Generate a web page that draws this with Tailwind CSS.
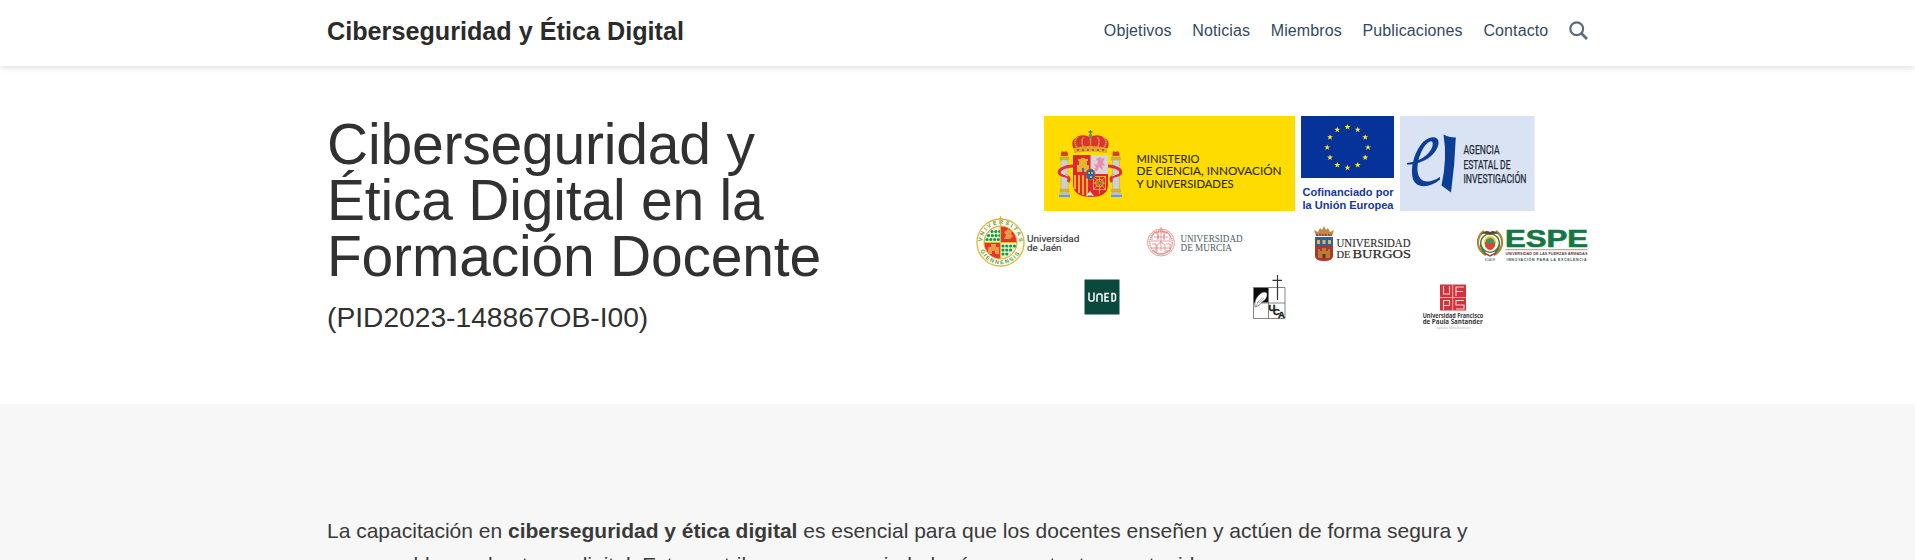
<!DOCTYPE html>
<html lang="es">
<head>
<meta charset="utf-8">
<title>Ciberseguridad y Ética Digital</title>
<script src="https://cdn.jsdelivr.net/npm/@tailwindcss/browser@4"></script>
</head>
<body class="h-[560px] overflow-hidden bg-white font-['Liberation_Sans',Arial,sans-serif] text-[#313131]">
<header class="h-[66px] bg-white shadow-[0_2px_6px_rgba(0,0,0,0.12)]">
  <div class="mx-auto flex h-[62px] w-[1261px] items-center justify-between">
    <a class="pt-[2px] text-[25.2px] font-bold leading-none whitespace-nowrap text-[#2b2b2b]">Ciberseguridad y Ética Digital</a>
    <nav class="flex items-center gap-[20.7px] text-base tracking-[0.11px] whitespace-nowrap text-[#34495e]">
      <a>Objetivos</a><a>Noticias</a><a>Miembros</a><a>Publicaciones</a><a>Contacto</a>
      <svg class="-mt-px size-[19px]" viewBox="0 0 19 19" fill="none" stroke="#5a6b7b" stroke-width="2.2"><circle cx="7.7" cy="7.7" r="6.4"/><path d="M12.3 12.3L18 18" stroke-width="2.7"/></svg>
    </nav>
  </div>
</header>
<main>
  <section class="mx-auto flex h-[338px] w-[1261px] justify-between">
    <div class="pt-[50px]">
      <h1 class="text-[57px] leading-[56px] tracking-[-0.2px] whitespace-nowrap">Ciberseguridad y<br>Ética Digital en la<br>Formación Docente</h1>
      <p class="mt-[19px] text-[28.2px] leading-none whitespace-nowrap">(PID2023-148867OB-I00)</p>
    </div>
    <div class="flex w-[613px] flex-col pt-[50px]">
      <div class="flex gap-[6px] pl-[69px]">
        <svg class="h-[96px] w-[251px] overflow-visible" viewBox="1044 116 251 96">
          <rect x="1044" y="116" width="251" height="95" fill="#ffdc00"/>
          <g stroke="#bba75b" stroke-width=".5">
            <path d="M1061 159h7v34h-7zM1112.500 159h7v34h-7z" fill="#cbd0d3"/>
            <path d="M1060 157h9v3h-9zM1111.500 157h9v3h-9zM1060 189h9v3h-9zM1111.500 189h9v3h-9z" fill="#dcae2c"/>
            <path d="M1061 156v-3l1-2 2 1 2-1 2 2v3zM1112.500 156v-3l1-2 2 1 2-1 2 2v3z" fill="#d83a2b"/>
          </g>
          <path d="M1059 193h11v4h-11zM1111 193h11v4h-11z" fill="#a9c4d8"/>
          <path d="M1059 196h11M1111 196h11" stroke="#3c6fae" stroke-width="1.200"/>
          <path d="M1074 166q-9 0-14 4-3 5 6 6 5 2 2 6M1107 166q8 0 13 4 3 5-6 6-5 2-2 6" fill="none" stroke="#dc3236" stroke-width="3"/>
          <path d="M1061 173l7 3M1112 176l7-3" stroke="#f2d9bb" stroke-width="1"/>
          <path d="M1073 155h35v30q0 12-17 12t-18-12z" fill="#dd2733"/>
          <path d="M1090.500 155h17.500v19h-17.500z" fill="#d9d3d5"/>
          <path d="M1094 171l2-4-2-3 3 1 1-4-2-2 4-2 2 2 3-2-2 5 2 4-3-1 1 5-4-3-2 4z" fill="#ec8cac"/>
          <path d="M1077 172v-7h2v-4h2v-3h4v3h2v4h2v7zM1078 159h10v2h-10z" fill="#e7b32e"/><path d="M1082 172v-4h2v4z" fill="#3e6eae"/>
          <path d="M1075 175v14M1079 175v18M1083 175v20M1087 175v21" stroke="#f2bd2e" stroke-width="1.800"/>
          <g fill="none" stroke="#e8aa2d" stroke-width="1"><rect x="1093.500" y="176.500" width="12" height="13"/><path d="M1093 176l13 14M1106 176l-13 14M1099.500 176v18M1093 183h13"/><circle cx="1099.500" cy="183" r="4"/></g>
          <circle cx="1099.500" cy="183" r="1.500" fill="#47924d"/>
          <path d="M1086 196l4-5 4 5z" fill="#e7e5dd"/><path d="M1088 196h4" stroke="#398d4d"/>
          <ellipse cx="1090.500" cy="174.500" rx="4.500" ry="5.500" fill="#2466a6" stroke="#d9453b"/><path d="M1088 173h2m1 0h2m-3 4h2" stroke="#f1cf42" stroke-width="1.500"/>
          <path d="M1075 151q-7-11 4-15 5-2 11 1 6-3 11-1 12 4 5 15z" fill="#d93332"/>
          <path d="M1078 149q-6-8 0-12M1084 149q-4-9 0-12M1090.500 149v-16M1097 149q4-9 0-12M1103 149q6-8 0-12" fill="none" stroke="#d8ae2c" stroke-width="1.600" stroke-dasharray="1.500 .6"/>
          <path d="M1074 148q16-4 33 0v5q-17-3-33 0z" fill="#dda82b"/><path d="M1077 150h27" stroke="#b33b34" stroke-width="1.500" stroke-dasharray="2 3"/>
          <path d="M1090.500 130v7M1088.500 132h4" stroke="#72783b" stroke-width="1.300"/><circle cx="1090.500" cy="136" r="2" fill="#6a993e"/>
          <g fill="#2d2a10" stroke="#2d2a10" stroke-width=".12" font-family="Lato, sans-serif" font-size="11.900">
            <text x="1136.500" y="162.500" textLength="63" lengthAdjust="spacingAndGlyphs">MINISTERIO</text>
            <text x="1136.500" y="175.300" textLength="145" lengthAdjust="spacingAndGlyphs">DE CIENCIA, INNOVACIÓN</text>
            <text x="1136.500" y="188" textLength="97" lengthAdjust="spacingAndGlyphs">Y UNIVERSIDADES</text>
          </g>
        </svg>
        <svg class="h-[96px] w-[93px] overflow-visible" viewBox="1301 116 93 96">
          <defs><path id="star" d="M0-3L.8-.9 3-.9 1.200.4 1.850 2.500 0 1.200-1.850 2.500-1.200.4-3-.9-.8-.9z" fill="#fce22a"/></defs>
          <path d="M1301 116h93v62h-93z" fill="#063399"/>
          <use href="#star" x="1347.500" y="127"/><use href="#star" x="1357.700" y="129.700"/><use href="#star" x="1365.200" y="137.200"/><use href="#star" x="1368" y="147.400"/><use href="#star" x="1365.200" y="157.500"/><use href="#star" x="1357.700" y="165"/><use href="#star" x="1347.500" y="167.700"/><use href="#star" x="1337.300" y="165"/><use href="#star" x="1330" y="157.500"/><use href="#star" x="1327.200" y="147.400"/><use href="#star" x="1330" y="137.200"/><use href="#star" x="1337.300" y="129.700"/>
          <g fill="#16389a" font-weight="bold" font-size="11.800"><text x="1302.500" y="195.500" textLength="91" lengthAdjust="spacingAndGlyphs">Cofinanciado por</text><text x="1302.500" y="209" textLength="91" lengthAdjust="spacingAndGlyphs">la Unión Europea</text></g>
        </svg>
        <svg class="h-[96px] w-[135px] overflow-visible" viewBox="1400 116 135 96">
          <path d="M1400 116h134.600v95h-134.600z" fill="#dae3f3"/>
          <g fill="#0b3e94"><path d="M1443.500 134.500q5 3 12.300 3-1 28-4.800 55l-9.500-7q6-27 2-51z"/>
          <path d="M1407 163C1419 162 1430 155 1432.500 146C1434 139 1429 140 1424 147C1417 158 1415.500 172 1420 178C1424 183.500 1432 182 1440 177L1440 179.500C1431 187 1420 189 1414.500 182C1409 173 1413 153 1423 142C1430 135.500 1439.500 135 1438.500 144C1436 156 1421 165 1407 164.500Z"/></g>
          <g fill="#202632" stroke="#202632" stroke-width=".25" font-family="Roboto, sans-serif" font-size="13.500"><text x="1463.500" y="154" textLength="36" lengthAdjust="spacingAndGlyphs">AGENCIA</text><text x="1463.500" y="168.500" textLength="47" lengthAdjust="spacingAndGlyphs">ESTATAL DE</text><text x="1463.500" y="183" textLength="63" lengthAdjust="spacingAndGlyphs">INVESTIGACIÓN</text></g>
        </svg>
      </div>
      <div class="mt-[3px] flex items-start">
        <svg class="h-[56px] w-[106px] overflow-visible" viewBox="975 215 106 56">
          <defs><path id="ring" d="M982 242.500a18.500 18.500 0 1 1 37 0"/><path id="arc" d="M979.300 248a22 22 0 0 0 42.400 0"/></defs>
          <circle cx="1000.500" cy="242.500" r="23.500" fill="#fffbe9" stroke="#dcb83e" stroke-width="1.300"/>
          <text font-size="5.500" font-weight="bold" fill="#4aa15a"><textPath href="#ring" startOffset="1" textLength="56">VNIVERSITAS</textPath></text>
          <text font-size="5.500" font-weight="bold" fill="#4aa15a"><textPath href="#arc" startOffset="3" textLength="48">GIENNENSIS</textPath></text>
          <circle cx="1000.500" cy="242.500" r="16.500" fill="#e8322c" stroke="#dcb83e"/>
          <path d="M1000.500 242.500h-16a16 16 0 0 1 16-16zM1000.500 242.500h16a16 16 0 0 1-16 16z" fill="#edf0cc"/>
          <path d="M992 231.500h8M988.500 235.500h12M987 239.500h13M1003 246h12M1003 250h10M1003 254h6" stroke="#139947" stroke-width="3.200" stroke-linecap="round" stroke-dasharray="0 3.800"/>
          <path d="M988 254v-7h3v-3h5v3h3v7zM1004 239l2-4-2-3 4-3 4 2-1 3 2 2-3 3z" fill="#e99a44"/><path d="M992 254v-3h3v3z" fill="#e8322c"/>
          <path d="M1000.500 216v43M985 242.500h31M998 219h5" stroke="#dcb83e" stroke-width="1.200"/>
          <g font-family="Roboto, sans-serif" font-size="9.800" fill="#3a3638" stroke="#3a3638" stroke-width=".15"><text x="1027" y="242" textLength="52.500" lengthAdjust="spacingAndGlyphs">Universidad</text><text x="1027" y="251" textLength="34.500" lengthAdjust="spacingAndGlyphs">de Jaén</text></g>
        </svg>
        <svg class="ml-[66px] h-[56px] w-[97px] overflow-visible" viewBox="1147 215 97 56">
          <g fill="none" stroke="#dc8580" stroke-width=".8"><circle cx="1161" cy="242.500" r="13.500"/><circle cx="1161" cy="242.500" r="11.300" stroke-dasharray="1.200 .8" stroke-width="1.500"/><path d="M1152 240v-5q3-5 6 0v5M1158 239v-7q3-5 6 0v7M1164 240v-5q3-5 6 0v5M1151 241h20M1152 244h4v7h-4M1166 244h4v7h-4M1157 252v-7l4-3 4 3v7M1154 232h14M1161 227v24M1151 248h20M1154 237h14M1155 252l3 2h6l3-2"/></g>
          <g font-family="Liberation Serif, serif" font-size="9.500" fill="#4f5b63"><text x="1180.500" y="241.500" textLength="62" lengthAdjust="spacingAndGlyphs">UNIVERSIDAD</text><text x="1180.500" y="250.800" textLength="51.500" lengthAdjust="spacingAndGlyphs">DE MURCIA</text></g>
        </svg>
        <svg class="ml-[69px] h-[56px] w-[100px] overflow-visible" viewBox="1313 215 100 56">
          <path d="M1315 237h18v19q0 5-9 5t-9-5z" fill="#aa382c"/><path d="M1315 237h18v9h-18z" fill="#305e9f"/><path d="M1317 240h3v4h-3zM1328 240h3v4h-3zM1322.500 240h3v4h-3z" fill="#d7ba5a"/>
          <path d="M1318 258v-9h2v2h2v-3h4v3h2v-2h2v9z" fill="#ba7c32"/><path d="M1322.500 258v-4h3v4z" fill="#61351e"/>
          <path d="M1316 236l-2-6 4 2 2-4 2 2 2-4 2 4 2-2 2 4 4-2-2 6z" fill="#bf8944"/><path d="M1316 235h16" stroke="#9b362d" stroke-width="1.300" stroke-dasharray="2 1"/>
          <g font-family="Liberation Serif, serif" fill="#302a2a" stroke="#302a2a" stroke-width=".15"><text x="1336.500" y="247.300" font-size="12.200" textLength="74" lengthAdjust="spacingAndGlyphs">UNIVERSIDAD</text><text x="1336.500" y="257.800" font-size="11" textLength="14" lengthAdjust="spacingAndGlyphs">DE</text><text x="1352.500" y="257.800" font-size="13.300" stroke-width=".25" textLength="58.500" lengthAdjust="spacingAndGlyphs">BURGOS</text></g>
        </svg>
        <svg class="ml-auto h-[56px] w-[113px] overflow-visible" viewBox="1475 215 113 56">
          <path d="M1484 231q-7 5-6 13 1 7 8 11M1496 231q7 5 6 13-1 7-8 11" fill="none" stroke="#b98037" stroke-width="2.200"/>
          <path d="M1483 237q-5 9 2 16M1497 237q5 9-2 16" fill="none" stroke="#338657" stroke-width="2"/>
          <circle cx="1490" cy="243" r="9.300" fill="#fff5e4" stroke="#377951" stroke-width="1.300"/><circle cx="1490" cy="242" r="6" fill="#e5c935"/><path d="M1485 242h10v4q-2 4-5 4t-5-4z" fill="#d94637"/><path d="M1486 240q4-4 8 0v3h-8z" fill="#508a67"/>
          <path d="M1481 234q5-5 9-2 4-3 9 2-5-1-9 1-4-2-9-1z" fill="#584a31"/><path d="M1484 253l6 3 6-3" fill="none" stroke="#b63b34" stroke-width="1.500"/>
          <text x="1485" y="261" font-size="2.800" textLength="10" fill="#333" lengthAdjust="spacingAndGlyphs">ECUADOR</text>
          <text x="1505" y="246.500" font-size="23" font-weight="bold" fill="#187642" stroke="#187642" stroke-width=".6" textLength="83" lengthAdjust="spacingAndGlyphs">ESPE</text>
          <path d="M1505.500 249.700h82" stroke="#b76b66" stroke-width=".8"/>
          <g fill="#554947" font-weight="bold"><text x="1505.500" y="255" font-size="4.200" textLength="82" lengthAdjust="spacingAndGlyphs">UNIVERSIDAD DE LAS FUERZAS ARMADAS</text><text x="1506.500" y="261" font-size="3.500" fill="#26563f" textLength="80">INNOVACIÓN PARA LA EXCELENCIA</text></g>
        </svg>
      </div>
      <div class="mt-px flex h-[58px] items-start justify-between pr-[104px] pl-[109px]">
        <svg class="h-[58px] w-[36px]" viewBox="1084 272 36 58"><path d="M1084.500 279.500h35v35h-35z" fill="#0c493d"/><path d="M1089 292.500v6.500q0 2 2 2h1q2 0 2-2v-6.500M1097 301.800v-5.800q0-2 2-2h1q2 0 2 2v5.800M1109 293.500h-4v7.500h4M1105 297.300h3.500M1112 293.500h1.500q2 0 2 2v3.500q0 2-2 2h-1.500z" fill="none" stroke="#fff" stroke-width="1.500"/></svg>
        <svg class="-ml-[4px] h-[58px] w-[34px] overflow-visible" viewBox="1252 272 34 58"><path d="M1253.500 287.500h15v15h-15z" fill="#0b0b0b"/><path d="M1253.500 287.500h31.500v31h-31.500zM1268.500 287.500v31M1253.500 303h31.500" fill="none" stroke="#777" stroke-width=".9"/><path d="M1255 307q-1-7 3-11 5-6 9-3 1 6-5 9-2 4-7 5z" fill="#fff" stroke="#333" stroke-width=".6"/><path d="M1257 303l5-5m-3 5l5-5m-8 8l3-5" stroke="#666" stroke-width=".5"/><path d="M1277.500 275v25M1272.500 280.300h9.500" stroke="#373737" stroke-width="1.200"/><g font-size="9.500" font-weight="bold" fill="#191919" stroke="#191919" stroke-width=".4"><text x="1268.500" y="310.500">U</text><text x="1273" y="315">C</text><text x="1278" y="318.200">A</text></g></svg>
        <svg class="h-[58px] w-[63px] overflow-visible" viewBox="1421 272 63 58"><path d="M1440 284.500h26v26h-26z" fill="#d0333c"/><path d="M1452.700 284.500v26M1440 297.500h26" stroke="#f7c6c8" stroke-width=".8"/><path d="M1443.500 286v8h6v-8M1456 296v-9h8M1456 291.500h7M1443.500 310v-9.500h6v5h-6M1464 300.500h-8v4.500h8v4h-8" fill="none" stroke="#f8d2d3" stroke-width="1.100"/><g font-family="Open Sans, sans-serif" font-size="6.300" font-weight="700" fill="#383336"><text x="1422.700" y="317.500" textLength="60.500" lengthAdjust="spacingAndGlyphs">Universidad Francisco</text><text x="1422.700" y="324" textLength="60" lengthAdjust="spacingAndGlyphs">de Paula Santander</text></g><text x="1435.500" y="328.500" font-size="4" fill="#bbb" textLength="35" lengthAdjust="spacingAndGlyphs">Vigilada Mineducación</text></svg>
      </div>
    </div>
  </section>
  <section class="h-[156px] overflow-hidden bg-[#f7f7f7]">
    <p class="mx-auto w-[1261px] pt-[110px] text-[21px] leading-[34px] whitespace-nowrap text-[#3a3a3a]">La capacitación en <strong>ciberseguridad y ética digital</strong> es esencial para que los docentes enseñen y actúen de forma segura y<br>responsable en el entorno digital. Esto contribuye a una sociedad más competente y protegida.</p>
  </section>
</main>
</body>
</html>
